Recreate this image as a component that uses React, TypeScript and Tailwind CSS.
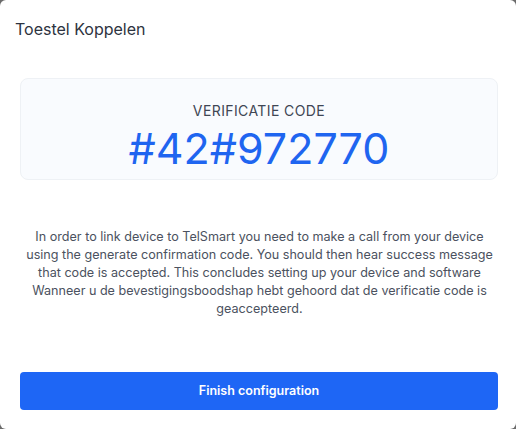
const App = () => {
  return (
    <div
      className="w-[516px] h-[429px] bg-[#6b6b6b] overflow-hidden"
      style={{ fontFamily: "Inter, 'Noto Sans', sans-serif" }}
    >
      <div className="w-full h-full bg-white rounded-md flex flex-col">
        <h2 className="pt-[17px] pl-[15px] text-base leading-6 text-[#2d3340]">
          Toestel Koppelen
        </h2>
        <div className="mt-[37px] ml-5 mr-[18px] h-[102px] rounded-lg border border-[#eef1f5] bg-[#f9fbfe] flex flex-col items-center">
          <div className="mt-[22px] text-sm leading-5 tracking-[0.4px] text-[#3f4654]">
            VERIFICATIE CODE
          </div>
          <div className="mt-[3px] text-[43px] leading-[48px] text-[#1f65f0]">
            #42#972770
          </div>
        </div>
        <p className="mt-[48px] pl-[22px] pr-[19px] text-center text-[12.6px] leading-[18px] text-[#4b5260]">
          In order to link device to TelSmart you need to make a call from your
          device using the generate confirmation code. You should then hear
          success message that code is accepted. This concludes setting up your
          device and software Wanneer u de bevestigingsboodshap hebt gehoord dat
          de verificatie code is geaccepteerd.
        </p>
        <button
          type="button"
          className="mt-auto mb-[19px] ml-5 mr-[18px] h-[38px] rounded bg-[#1e66f5] text-[12.5px] font-semibold text-white"
        >
          Finish configuration
        </button>
      </div>
    </div>
  );
};

export default App;
